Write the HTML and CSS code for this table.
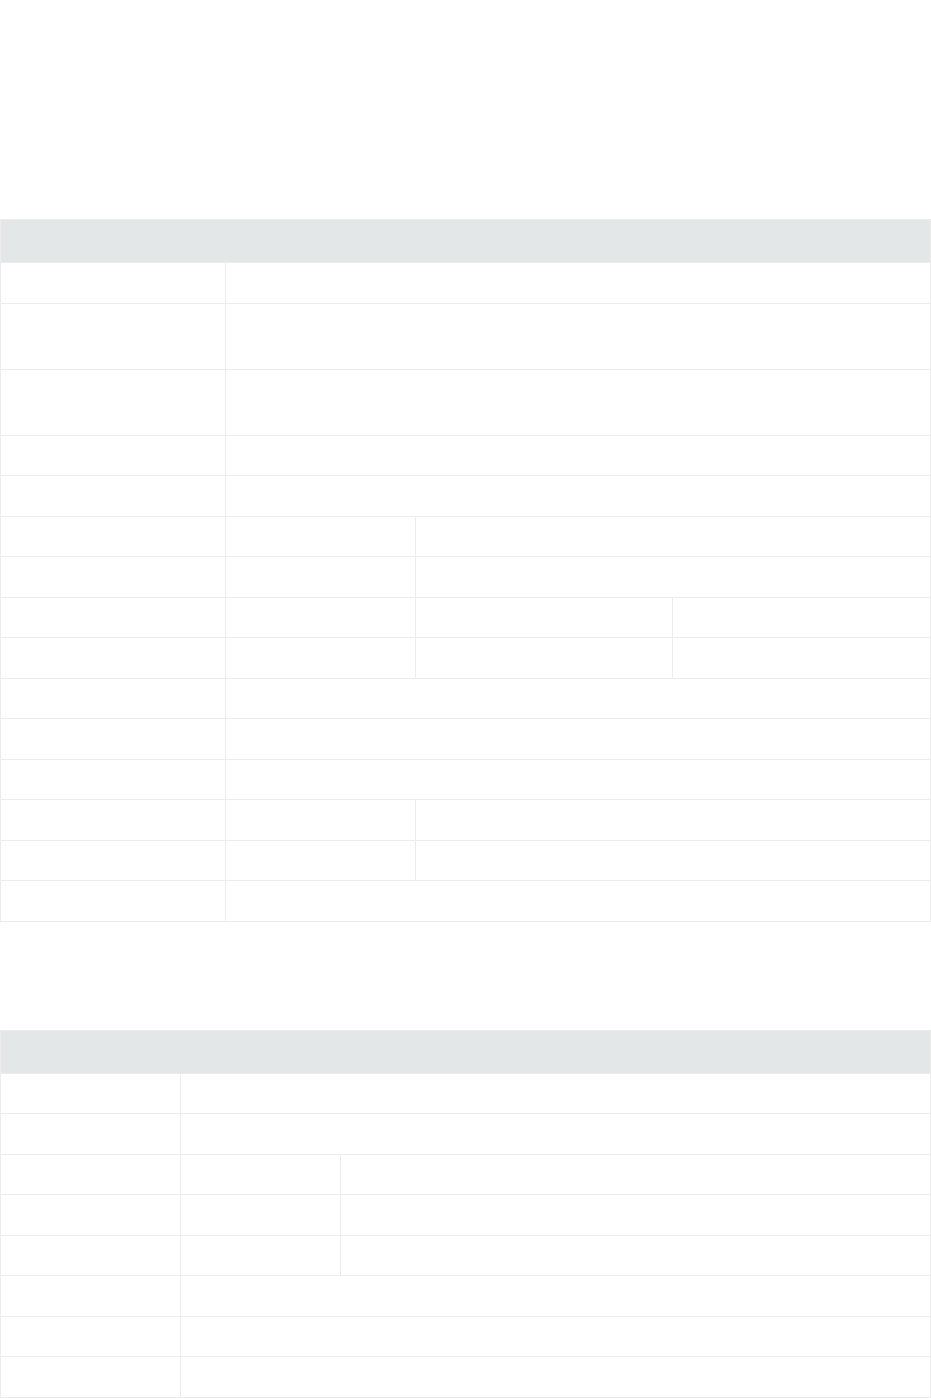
FILE: index.html
```html
<!DOCTYPE html>
<html lang="es">
<head>
  <meta charset="UTF-8">
  <title>Ficha</title>
  <link rel="stylesheet" href="styles.css">
</head>
<body>
  <div class="ficha">

    <!-- TABLA 1 -->
    <table class="tabla tabla-datos">
      <colgroup>
        <col class="c1">
        <col class="c2">
        <col class="c3">
        <col>
      </colgroup>
      <tr class="cabecera"><th colspan="4">&nbsp;</th></tr>
      <tr><td>&nbsp;</td><td colspan="3">&nbsp;</td></tr>
      <tr class="alta"><td>&nbsp;</td><td colspan="3">&nbsp;</td></tr>
      <tr class="alta"><td>&nbsp;</td><td colspan="3">&nbsp;</td></tr>
      <tr><td>&nbsp;</td><td colspan="3">&nbsp;</td></tr>
      <tr><td>&nbsp;</td><td colspan="3">&nbsp;</td></tr>
      <tr><td>&nbsp;</td><td>&nbsp;</td><td colspan="2">&nbsp;</td></tr>
      <tr><td>&nbsp;</td><td>&nbsp;</td><td colspan="2">&nbsp;</td></tr>
      <tr><td>&nbsp;</td><td>&nbsp;</td><td>&nbsp;</td><td>&nbsp;</td></tr>
      <tr><td>&nbsp;</td><td>&nbsp;</td><td>&nbsp;</td><td>&nbsp;</td></tr>
      <tr><td>&nbsp;</td><td colspan="3">&nbsp;</td></tr>
      <tr><td>&nbsp;</td><td colspan="3">&nbsp;</td></tr>
      <tr><td>&nbsp;</td><td colspan="3">&nbsp;</td></tr>
      <tr><td>&nbsp;</td><td>&nbsp;</td><td colspan="2">&nbsp;</td></tr>
      <tr><td>&nbsp;</td><td>&nbsp;</td><td colspan="2">&nbsp;</td></tr>
      <tr><td>&nbsp;</td><td colspan="3">&nbsp;</td></tr>
    </table>

    <!-- TABLA 2 -->
    <table class="tabla tabla-extra">
      <colgroup>
        <col class="c1">
        <col class="c2">
        <col>
      </colgroup>
      <tr class="cabecera"><th colspan="3">&nbsp;</th></tr>
      <tr><td>&nbsp;</td><td colspan="2">&nbsp;</td></tr>
      <tr><td>&nbsp;</td><td colspan="2">&nbsp;</td></tr>
      <tr><td>&nbsp;</td><td>&nbsp;</td><td>&nbsp;</td></tr>
      <tr><td>&nbsp;</td><td>&nbsp;</td><td>&nbsp;</td></tr>
      <tr><td>&nbsp;</td><td>&nbsp;</td><td>&nbsp;</td></tr>
      <tr><td>&nbsp;</td><td colspan="2">&nbsp;</td></tr>
      <tr><td>&nbsp;</td><td colspan="2">&nbsp;</td></tr>
      <tr><td>&nbsp;</td><td colspan="2">&nbsp;</td></tr>
    </table>

  </div>
</body>
</html>
```

FILE: styles.css
```css
body {
  margin: 0;
  font-family: "Open Sans", Arial, sans-serif;
  font-size: 14px;
  color: #ffffff;
  background-color: #ffffff;
}

.ficha {
  padding-top: 219px;
}

.tabla {
  width: 931px;
  border-collapse: collapse;
  table-layout: fixed;
}

.tabla th,
.tabla td {
  border: 1px solid #ececec;
  padding: 0 10px;
}

.tabla tr {
  height: 40.5px;
}

.tabla tr.alta {
  height: 66px;
}

.tabla tr.cabecera {
  height: 43px;
}

.cabecera th {
  background-color: #e4e7e8;
}

.tabla-datos .c1 { width: 225px; }
.tabla-datos .c2 { width: 190px; }
.tabla-datos .c3 { width: 257px; }

.tabla-extra {
  margin-top: 108px;
}

.tabla-extra .c1 { width: 180px; }
.tabla-extra .c2 { width: 160px; }
```
